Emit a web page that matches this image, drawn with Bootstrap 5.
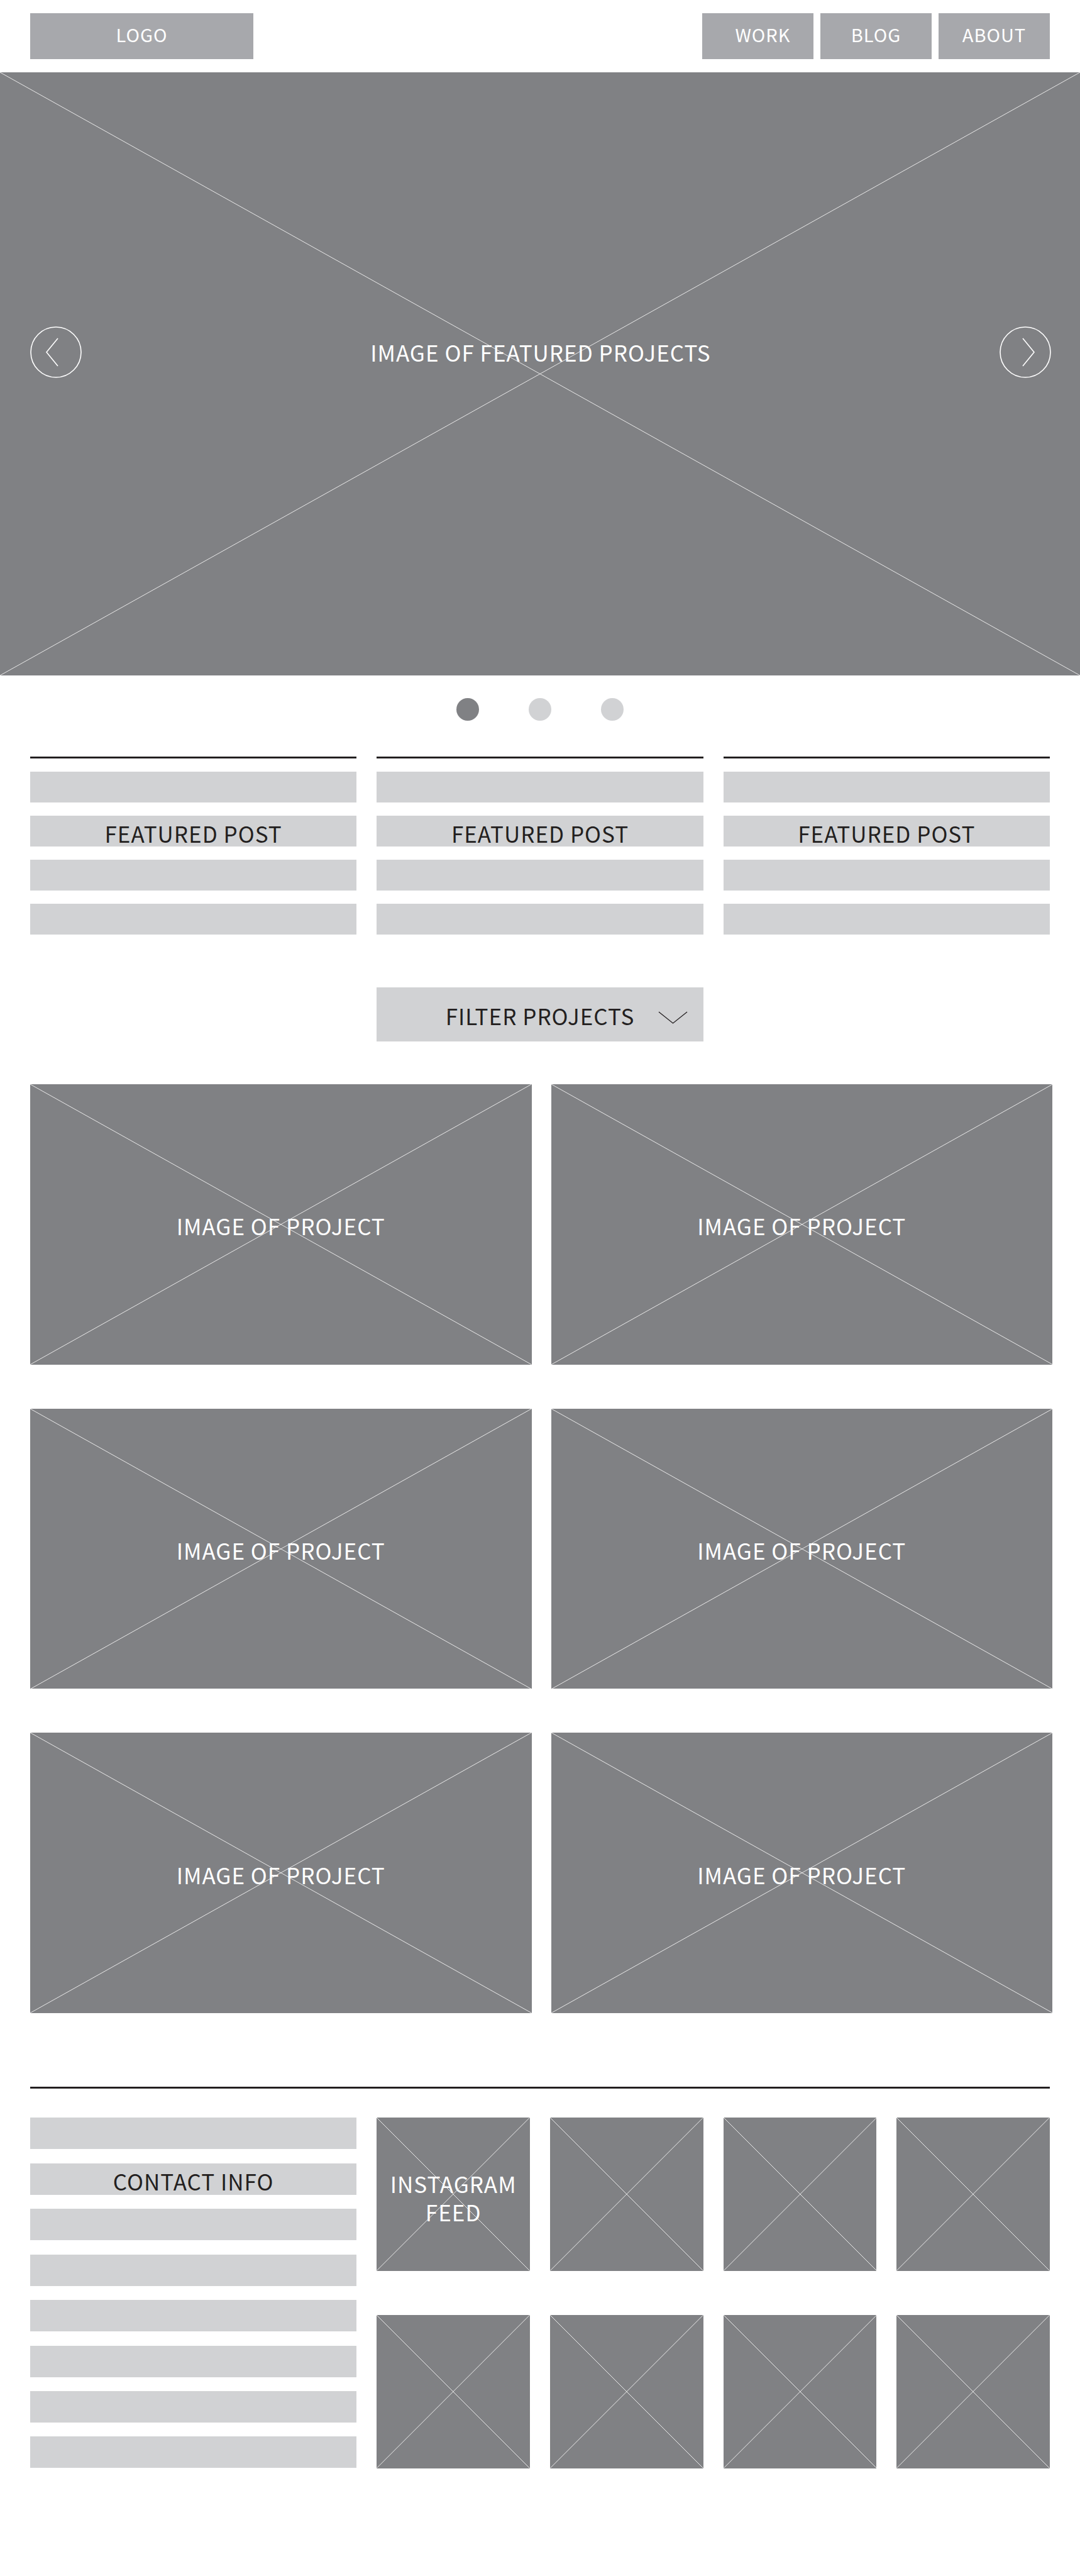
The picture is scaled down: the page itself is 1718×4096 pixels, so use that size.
<!DOCTYPE html>
<html lang="en">
<head>
<meta charset="utf-8">
<meta name="viewport" content="width=device-width, initial-scale=1">
<title>Portfolio wireframe</title>
<link href="https://cdn.jsdelivr.net/npm/bootstrap@5.3.0/dist/css/bootstrap.min.css" rel="stylesheet">
<style>
  :root { --mid: #a7a8ac; --dark: #808184; --pale: #d1d2d4; --ink: #231f20; }
  body { font-family: "Noto Sans CJK SC", "Open Sans", sans-serif; font-size: 35px; line-height: 45px; letter-spacing: 1px; color: var(--ink); background: #fff; }
  .page-x { padding-left: 48px; padding-right: 48px; }
  .topbar { padding-top: 21px; padding-bottom: 21px; }
  .tab-box { background: var(--mid); color: #fff; font-size: 29px; height: 73px; padding-bottom: 7px; text-decoration: none; width: 177px; }
  .tab-box:hover { color: #fff; }
  .tab-logo { width: 355px; }
  .tabs-gap { gap: 11px; }
  .frame { position: relative; background: var(--dark); color: #fff; text-align: center; display: flex; align-items: center; justify-content: center; }
  .frame > .cross { position: absolute; inset: 0; width: 100%; height: 100%; stroke: #e8e8e8; stroke-width: 1; }
  .frame > .caption-text { position: relative; padding-top: 4px; }
  .hero { aspect-ratio: 1718 / 959; justify-content: space-between; padding: 0 46px 70px 48px; }
  .arrow-btn { position: relative; border: 0; padding: 0; background: none; width: 82px; height: 82px; display: block; }
  .arrow-btn svg, .chev { display: block; fill: none; }
  .hero > .caption-text { padding-top: 0; }
  .dots { gap: 79px; padding-top: 36px; padding-bottom: 57px; }
  .dot-btn { width: 36px; height: 36px; border: 0; padding: 0; border-radius: 50%; background: var(--pale); }
  .dot-btn.active { background: var(--dark); }
  .rule-line { height: 3px; background: var(--ink); border: 0; opacity: 1; margin: 0; }
  .thirds { --bs-gutter-x: 32px; }
  .bars { gap: 21px; }
  .bar-line { height: 49px; background: var(--pale); text-align: center; padding-top: 5px; }
  .bar-line h2 { font: inherit; margin: 0; }
  .post .rule-line { margin-bottom: 21px; }
  .filter-wrap { position: relative; margin-top: 84px; margin-bottom: 68px; }
  .filter-select { width: 100%; height: 86px; border: 0; border-radius: 0; background: var(--pale); color: var(--ink); appearance: none; text-align: center; text-align-last: center; letter-spacing: inherit; padding: 3px 0 0; display: block; }
  .chev { position: absolute; right: 25px; top: 38px; pointer-events: none; }
  .projects { display: grid; grid-template-columns: 1fr 1fr; column-gap: 31px; row-gap: 70px; padding-left: 48px; padding-right: 44px; }
  .project { aspect-ratio: 798 / 446; }
  .site-foot { padding-top: 117px; padding-bottom: 171px; }
  .site-foot > .rule-line { margin-bottom: 46px; }
  .foot-bars .bar-line { height: 50px; }
  .feed { display: grid; grid-template-columns: repeat(4, 1fr); column-gap: 32px; row-gap: 70px; }
  .shot { aspect-ratio: 1; }
  .feed .caption-text { padding-top: 10px; }
</style>
<script src="https://cdn.jsdelivr.net/npm/bootstrap@5.3.0/dist/js/bootstrap.bundle.min.js"></script>
</head>
<body>
<header class="topbar page-x d-flex justify-content-between">
  <a href="#" class="tab-box tab-logo d-flex align-items-center justify-content-center">LOGO</a>
  <nav class="d-flex tabs-gap" aria-label="Main">
    <a href="#work" class="tab-box d-flex align-items-center justify-content-center ps-3">WORK</a>
    <a href="#blog" class="tab-box d-flex align-items-center justify-content-center">BLOG</a>
    <a href="#about" class="tab-box d-flex align-items-center justify-content-center">ABOUT</a>
  </nav>
</header>

<main>
  <section class="frame hero" aria-label="Featured projects">
    <svg class="cross" aria-hidden="true"><line x1="0" y1="0" x2="100%" y2="100%"/><line x1="100%" y1="0" x2="0" y2="100%"/></svg>
    <button type="button" class="arrow-btn" aria-label="Previous">
      <svg width="82" height="82" stroke="#fff" stroke-width="1.6"><circle cx="41" cy="41" r="40"/><path d="M44 19 26 41 44 63"/></svg>
    </button>
    <span class="caption-text">IMAGE OF FEATURED PROJECTS</span>
    <button type="button" class="arrow-btn" aria-label="Next">
      <svg width="82" height="82" stroke="#fff" stroke-width="1.6"><circle cx="41" cy="41" r="40"/><path d="M37 19 55 41 37 63"/></svg>
    </button>
  </section>

  <div class="dots d-flex justify-content-center">
    <button type="button" class="dot-btn active" aria-label="Slide 1"></button>
    <button type="button" class="dot-btn" aria-label="Slide 2"></button>
    <button type="button" class="dot-btn" aria-label="Slide 3"></button>
  </div>

  <div class="page-x" id="blog">
    <div class="row thirds">
      <article class="col-4 post">
        <hr class="rule-line">
        <div class="bars d-flex flex-column"><div class="bar-line"></div><div class="bar-line"><h2>FEATURED POST</h2></div><div class="bar-line"></div><div class="bar-line"></div></div>
      </article>
      <article class="col-4 post">
        <hr class="rule-line">
        <div class="bars d-flex flex-column"><div class="bar-line"></div><div class="bar-line"><h2>FEATURED POST</h2></div><div class="bar-line"></div><div class="bar-line"></div></div>
      </article>
      <article class="col-4 post">
        <hr class="rule-line">
        <div class="bars d-flex flex-column"><div class="bar-line"></div><div class="bar-line"><h2>FEATURED POST</h2></div><div class="bar-line"></div><div class="bar-line"></div></div>
      </article>
    </div>
    <div class="row thirds justify-content-center">
      <div class="col-4">
        <div class="filter-wrap">
          <select class="filter-select" aria-label="Filter projects"><option>FILTER PROJECTS</option></select>
          <svg class="chev" width="47" height="21" stroke="#231f20" stroke-width="1.3" aria-hidden="true"><path d="M1 1 23.500 19 46 1"/></svg>
        </div>
      </div>
    </div>
  </div>

  <section class="projects" id="work">
    <div class="frame project"><svg class="cross" aria-hidden="true"><line x1="0" y1="0" x2="100%" y2="100%"/><line x1="100%" y1="0" x2="0" y2="100%"/></svg><span class="caption-text">IMAGE OF PROJECT</span></div>
    <div class="frame project"><svg class="cross" aria-hidden="true"><line x1="0" y1="0" x2="100%" y2="100%"/><line x1="100%" y1="0" x2="0" y2="100%"/></svg><span class="caption-text">IMAGE OF PROJECT</span></div>
    <div class="frame project"><svg class="cross" aria-hidden="true"><line x1="0" y1="0" x2="100%" y2="100%"/><line x1="100%" y1="0" x2="0" y2="100%"/></svg><span class="caption-text">IMAGE OF PROJECT</span></div>
    <div class="frame project"><svg class="cross" aria-hidden="true"><line x1="0" y1="0" x2="100%" y2="100%"/><line x1="100%" y1="0" x2="0" y2="100%"/></svg><span class="caption-text">IMAGE OF PROJECT</span></div>
    <div class="frame project"><svg class="cross" aria-hidden="true"><line x1="0" y1="0" x2="100%" y2="100%"/><line x1="100%" y1="0" x2="0" y2="100%"/></svg><span class="caption-text">IMAGE OF PROJECT</span></div>
    <div class="frame project"><svg class="cross" aria-hidden="true"><line x1="0" y1="0" x2="100%" y2="100%"/><line x1="100%" y1="0" x2="0" y2="100%"/></svg><span class="caption-text">IMAGE OF PROJECT</span></div>
  </section>
</main>

<footer class="site-foot page-x" id="about">
  <hr class="rule-line">
  <div class="row thirds">
    <section class="col-4 foot-bars d-flex flex-column justify-content-between">
      <div class="bar-line"></div><div class="bar-line"><h2>CONTACT INFO</h2></div><div class="bar-line"></div><div class="bar-line"></div>
      <div class="bar-line"></div><div class="bar-line"></div><div class="bar-line"></div><div class="bar-line"></div>
    </section>
    <section class="col-8">
      <div class="feed">
        <div class="frame shot"><svg class="cross" aria-hidden="true"><line x1="0" y1="0" x2="100%" y2="100%"/><line x1="100%" y1="0" x2="0" y2="100%"/></svg><span class="caption-text">INSTAGRAM<br>FEED</span></div>
        <div class="frame shot"><svg class="cross" aria-hidden="true"><line x1="0" y1="0" x2="100%" y2="100%"/><line x1="100%" y1="0" x2="0" y2="100%"/></svg></div>
        <div class="frame shot"><svg class="cross" aria-hidden="true"><line x1="0" y1="0" x2="100%" y2="100%"/><line x1="100%" y1="0" x2="0" y2="100%"/></svg></div>
        <div class="frame shot"><svg class="cross" aria-hidden="true"><line x1="0" y1="0" x2="100%" y2="100%"/><line x1="100%" y1="0" x2="0" y2="100%"/></svg></div>
        <div class="frame shot"><svg class="cross" aria-hidden="true"><line x1="0" y1="0" x2="100%" y2="100%"/><line x1="100%" y1="0" x2="0" y2="100%"/></svg></div>
        <div class="frame shot"><svg class="cross" aria-hidden="true"><line x1="0" y1="0" x2="100%" y2="100%"/><line x1="100%" y1="0" x2="0" y2="100%"/></svg></div>
        <div class="frame shot"><svg class="cross" aria-hidden="true"><line x1="0" y1="0" x2="100%" y2="100%"/><line x1="100%" y1="0" x2="0" y2="100%"/></svg></div>
        <div class="frame shot"><svg class="cross" aria-hidden="true"><line x1="0" y1="0" x2="100%" y2="100%"/><line x1="100%" y1="0" x2="0" y2="100%"/></svg></div>
      </div>
    </section>
  </div>
</footer>
</body>
</html>
